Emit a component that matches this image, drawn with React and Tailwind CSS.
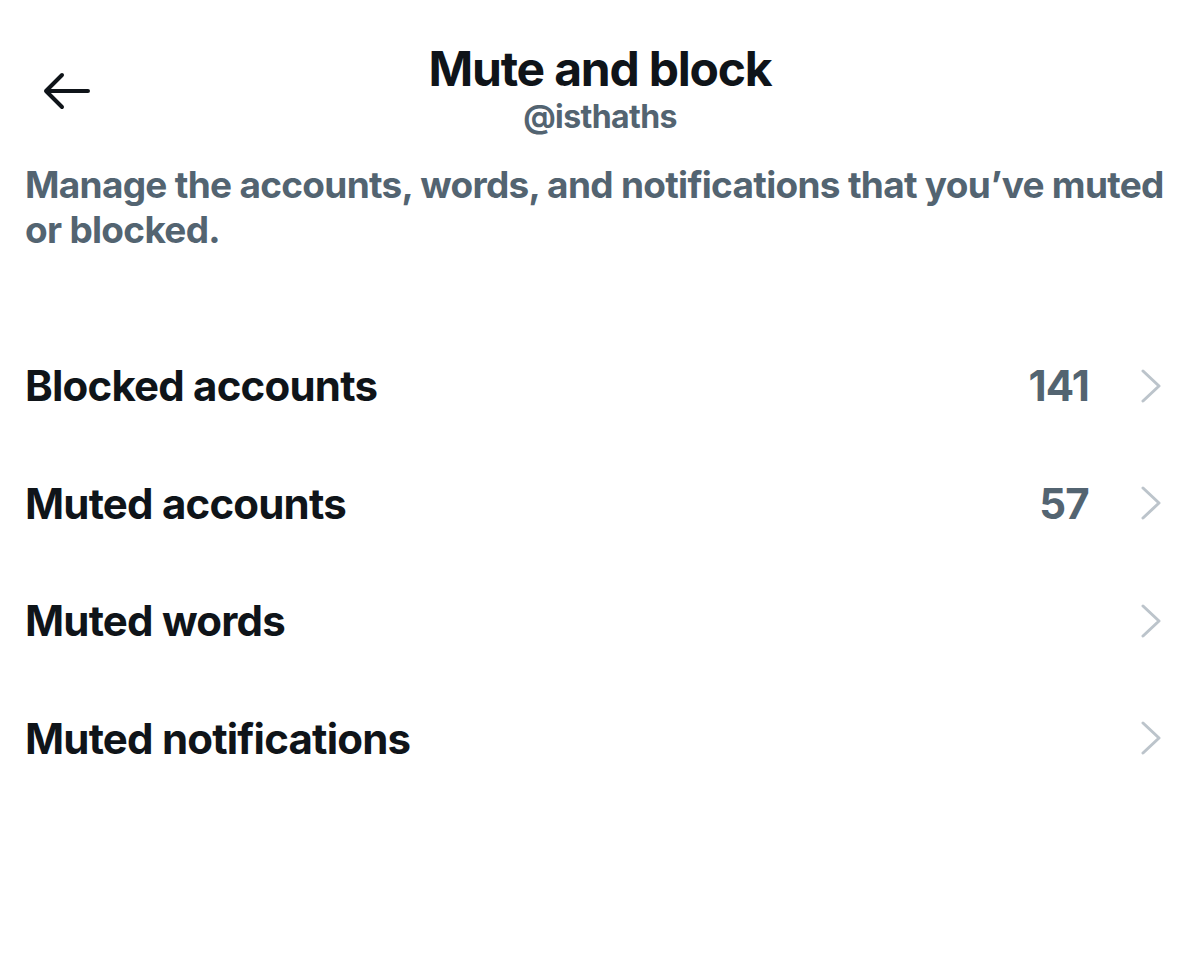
import React from 'react';

const rows = [
    { label: 'Blocked accounts', count: '141' },
    { label: 'Muted accounts', count: '57' },
    { label: 'Muted words', count: '' },
    { label: 'Muted notifications', count: '' },
];

const Chevron = () => (
    <svg width="22" height="34" viewBox="0 0 22 34" fill="none" className="shrink-0">
        <path d="M3 2 L19 17 L3 32" stroke="#bcc4cb" strokeWidth="3" strokeLinecap="round" strokeLinejoin="round" />
    </svg>
);

const App = () => {
    return (
        <div className="w-[1200px] h-[954px] bg-white font-['Inter',sans-serif] text-[#0f1419] overflow-hidden">
            {/* Header */}
            <div className="grid grid-cols-[1fr_auto_1fr] items-start pt-[40px] px-[25px]">
                <div className="pt-[32px] pl-[17px]">
                    <svg width="48" height="38" viewBox="0 0 48 38" fill="none">
                        <path d="M46 19 H4 M20 3 L4 19 L20 35" stroke="#0f1419" strokeWidth="4" strokeLinecap="round" strokeLinejoin="round" />
                    </svg>
                </div>
                <div className="flex flex-col items-center">
                    <h1 className="text-[48px] font-bold leading-[58px] tracking-[-1.2px]">Mute and block</h1>
                    <p className="text-[32px] font-bold leading-[38px] text-[#536471] tracking-[-0.6px]">@isthaths</p>
                </div>
                <div />
            </div>

            {/* Description */}
            <p className="pl-[25px] pr-[6px] mt-[26px] text-[37px] font-bold leading-[45px] text-[#536471] tracking-[-0.7px]">
                Manage the accounts, words, and notifications that you’ve muted or blocked.
            </p>

            {/* Rows */}
            <div className="mt-[75px] flex flex-col">
                {rows.map((r) => (
                    <div key={r.label} className="h-[117.5px] flex items-center pl-[25px] pr-[38px]">
                        <span className="flex-1 text-[42px] font-bold tracking-[-0.8px]">{r.label}</span>
                        {r.count && (
                            <span className="text-[42px] font-bold text-[#536471] tracking-[-0.8px] mr-[51px]">{r.count}</span>
                        )}
                        <Chevron />
                    </div>
                ))}
            </div>
        </div>
    );
};

export default App;
